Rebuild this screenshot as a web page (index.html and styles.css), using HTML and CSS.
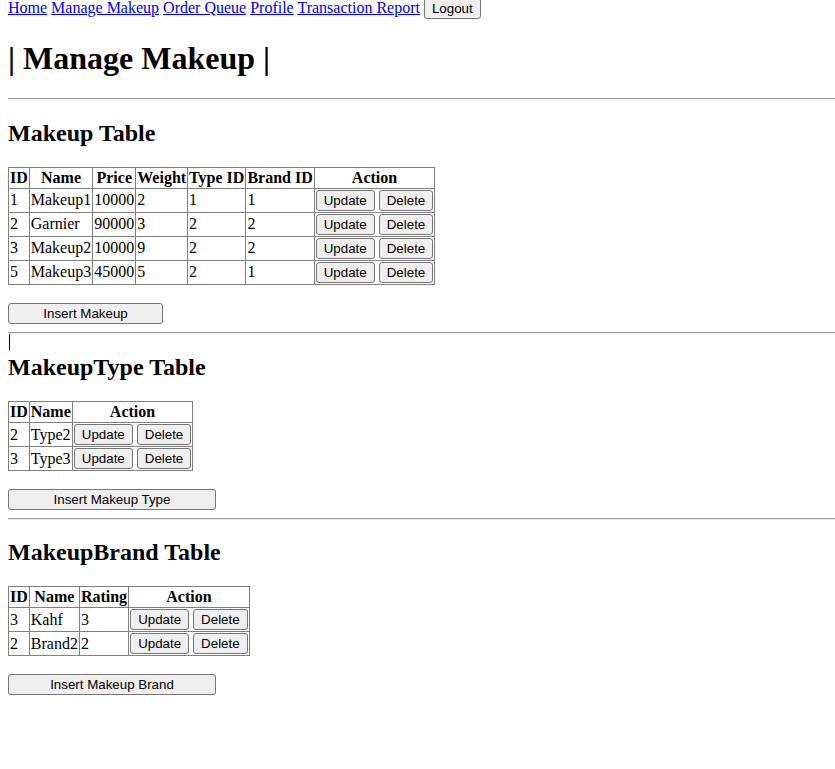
FILE: index.html
```html
<!DOCTYPE html>
<html>
<head>
<meta charset="utf-8">
<title>Manage Makeup</title>
<link rel="stylesheet" href="styles.css">
</head>
<body>
<nav class="topnav">
<a href="#">Home</a>
<a href="#">Manage Makeup</a>
<a href="#">Order Queue</a>
<a href="#">Profile</a>
<a href="#">Transaction Report</a>
<button class="btn">Logout</button>
</nav>
<h1 class="page-title">| Manage Makeup |</h1>
<hr class="rule">

<h2 class="section-title">Makeup Table</h2>
<table class="data">
<tr><th>ID</th><th>Name</th><th>Price</th><th>Weight</th><th>Type ID</th><th>Brand ID</th><th>Action</th></tr>
<tr><td>1</td><td>Makeup1</td><td>10000</td><td>2</td><td>1</td><td>1</td><td><button class="btn">Update</button> <button class="btn">Delete</button></td></tr>
<tr><td>2</td><td>Garnier</td><td>90000</td><td>3</td><td>2</td><td>2</td><td><button class="btn">Update</button> <button class="btn">Delete</button></td></tr>
<tr><td>3</td><td>Makeup2</td><td>10000</td><td>9</td><td>2</td><td>2</td><td><button class="btn">Update</button> <button class="btn">Delete</button></td></tr>
<tr><td>5</td><td>Makeup3</td><td>45000</td><td>5</td><td>2</td><td>1</td><td><button class="btn">Update</button> <button class="btn">Delete</button></td></tr>
</table>
<div class="insert-row"><button class="btn insert-narrow">Insert Makeup</button></div>
<hr class="rule">
<div class="caret-anchor"><span class="caret"></span></div>

<h2 class="section-title">MakeupType Table</h2>
<table class="data">
<tr><th>ID</th><th>Name</th><th>Action</th></tr>
<tr><td>2</td><td>Type2</td><td><button class="btn">Update</button> <button class="btn">Delete</button></td></tr>
<tr><td>3</td><td>Type3</td><td><button class="btn">Update</button> <button class="btn">Delete</button></td></tr>
</table>
<div class="insert-row"><button class="btn insert-wide">Insert Makeup Type</button></div>
<hr class="rule">

<h2 class="section-title section-title-tight">MakeupBrand Table</h2>
<table class="data">
<tr><th>ID</th><th>Name</th><th>Rating</th><th>Action</th></tr>
<tr><td>3</td><td>Kahf</td><td>3</td><td><button class="btn">Update</button> <button class="btn">Delete</button></td></tr>
<tr><td>2</td><td>Brand2</td><td>2</td><td><button class="btn">Update</button> <button class="btn">Delete</button></td></tr>
</table>
<div class="insert-row insert-row-tight"><button class="btn insert-wide">Insert Makeup Brand</button></div>
</body>
</html>
```
FILE: styles.css
```css
html, body {
  background: #ffffff;
}
body {
  margin: 0 0 8px 8px;
  font-family: "Liberation Serif", "Times New Roman", serif;
  font-size: 16px;
  color: #000000;
}
.topnav {
  margin-top: -2px;
}
.topnav a {
  color: #0000ee;
  text-decoration: underline;
}
.page-title {
  font-size: 32px;
  font-weight: bold;
  margin: 21px 0;
}
.rule {
  margin: 8px 0;
  border: none;
  border-top: 1px solid #9a9a9a;
  border-bottom: 1px solid #eeeeee;
  height: 0;
}
.section-title {
  font-size: 24px;
  font-weight: bold;
  margin: 19.92px 0;
}
.section-title-tight {
  margin-top: 19px;
}
.data {
  border-collapse: collapse;
}
.data th, .data td {
  border: 1px solid #808080;
  padding: 1px;
}
.data th {
  text-align: center;
  font-weight: bold;
}
.data td {
  text-align: left;
}
.btn {
  font-family: "Liberation Sans", Arial, sans-serif;
  font-size: 13.333px;
  color: #000000;
  background: #efefef;
  border: 1px solid #767676;
  border-radius: 3px;
  padding: 2px 7px;
  margin: 0;
}
.insert-row {
  padding-top: 18.4px;
}
.insert-row-tight {
  padding-top: 17.6px;
}
.insert-narrow {
  width: 155px;
}
.insert-wide {
  width: 208px;
}
.caret-anchor {
  position: relative;
  height: 0;
}
.caret {
  position: absolute;
  left: 1px;
  top: -8px;
  width: 1px;
  height: 16px;
  background: #000000;
}
```
